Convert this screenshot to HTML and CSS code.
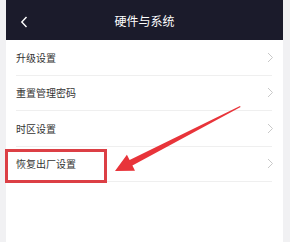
FILE: index.html
```html
<html>
<head>
    <title>硬件与系统</title>
    <link rel="stylesheet" href="styles.css">
</head>
<body>
    <div class="page">
        <div class="topbar">
            <svg class="back" width="8" height="12" viewBox="0 0 8 12"><path d="M6.5 1 L1.8 6 L6.5 11" fill="none" stroke="#fff" stroke-width="1.4"/></svg>
            <span class="title">硬件与系统</span>
        </div>
        <div class="list">
            <div class="row"><span>升级设置</span><svg class="arrow" width="7" height="11" viewBox="0 0 7 11"><path d="M1 1 L5.5 5.5 L1 10" fill="none" stroke="#c9c9c9" stroke-width="1"/></svg></div>
            <div class="row"><span>重置管理密码</span><svg class="arrow" width="7" height="11" viewBox="0 0 7 11"><path d="M1 1 L5.5 5.5 L1 10" fill="none" stroke="#c9c9c9" stroke-width="1"/></svg></div>
            <div class="row"><span>时区设置</span><svg class="arrow" width="7" height="11" viewBox="0 0 7 11"><path d="M1 1 L5.5 5.5 L1 10" fill="none" stroke="#c9c9c9" stroke-width="1"/></svg></div>
            <div class="row"><span>恢复出厂设置</span><svg class="arrow" width="7" height="11" viewBox="0 0 7 11"><path d="M1 1 L5.5 5.5 L1 10" fill="none" stroke="#c9c9c9" stroke-width="1"/></svg></div>
        </div>
    </div>

    <!-- annotation drawn over the screenshot -->
    <svg class="mark" width="290" height="242" viewBox="0 0 290 242">
        <rect x="6.5" y="150.5" width="99" height="31" fill="none" stroke="#dc3f45" stroke-width="3"/>
        <polygon points="240,106 129.6,160 126.9,154.7 115,171 135,170.7 132.4,165.4 240.6,107" fill="#e8343a"/>
    </svg>
</body>
</html>
```

FILE: styles.css
```css
body { margin: 0; background-color: #f1f1f3; font-family: "Noto Sans CJK SC", "Noto Sans", sans-serif; }
.page { margin: 0 7px 0 6px; height: 242px; background-color: #fff; }
.topbar { height: 40px; background-color: #1b1b2b; display: flex; align-items: center; justify-content: center; position: relative; }
.back { position: absolute; left: 14px; top: 16px; }
.title { color: #fff; font-size: 12px; }
.list { padding: 0 11px 0 10px; }
.row { height: 35.5px; border-bottom: 1px solid #efefef; display: flex; align-items: center; justify-content: space-between; font-size: 10px; color: #333; box-sizing: border-box; }
.arrow { margin-right: -2px; }
.mark { position: absolute; left: 0; top: 0; }
```
